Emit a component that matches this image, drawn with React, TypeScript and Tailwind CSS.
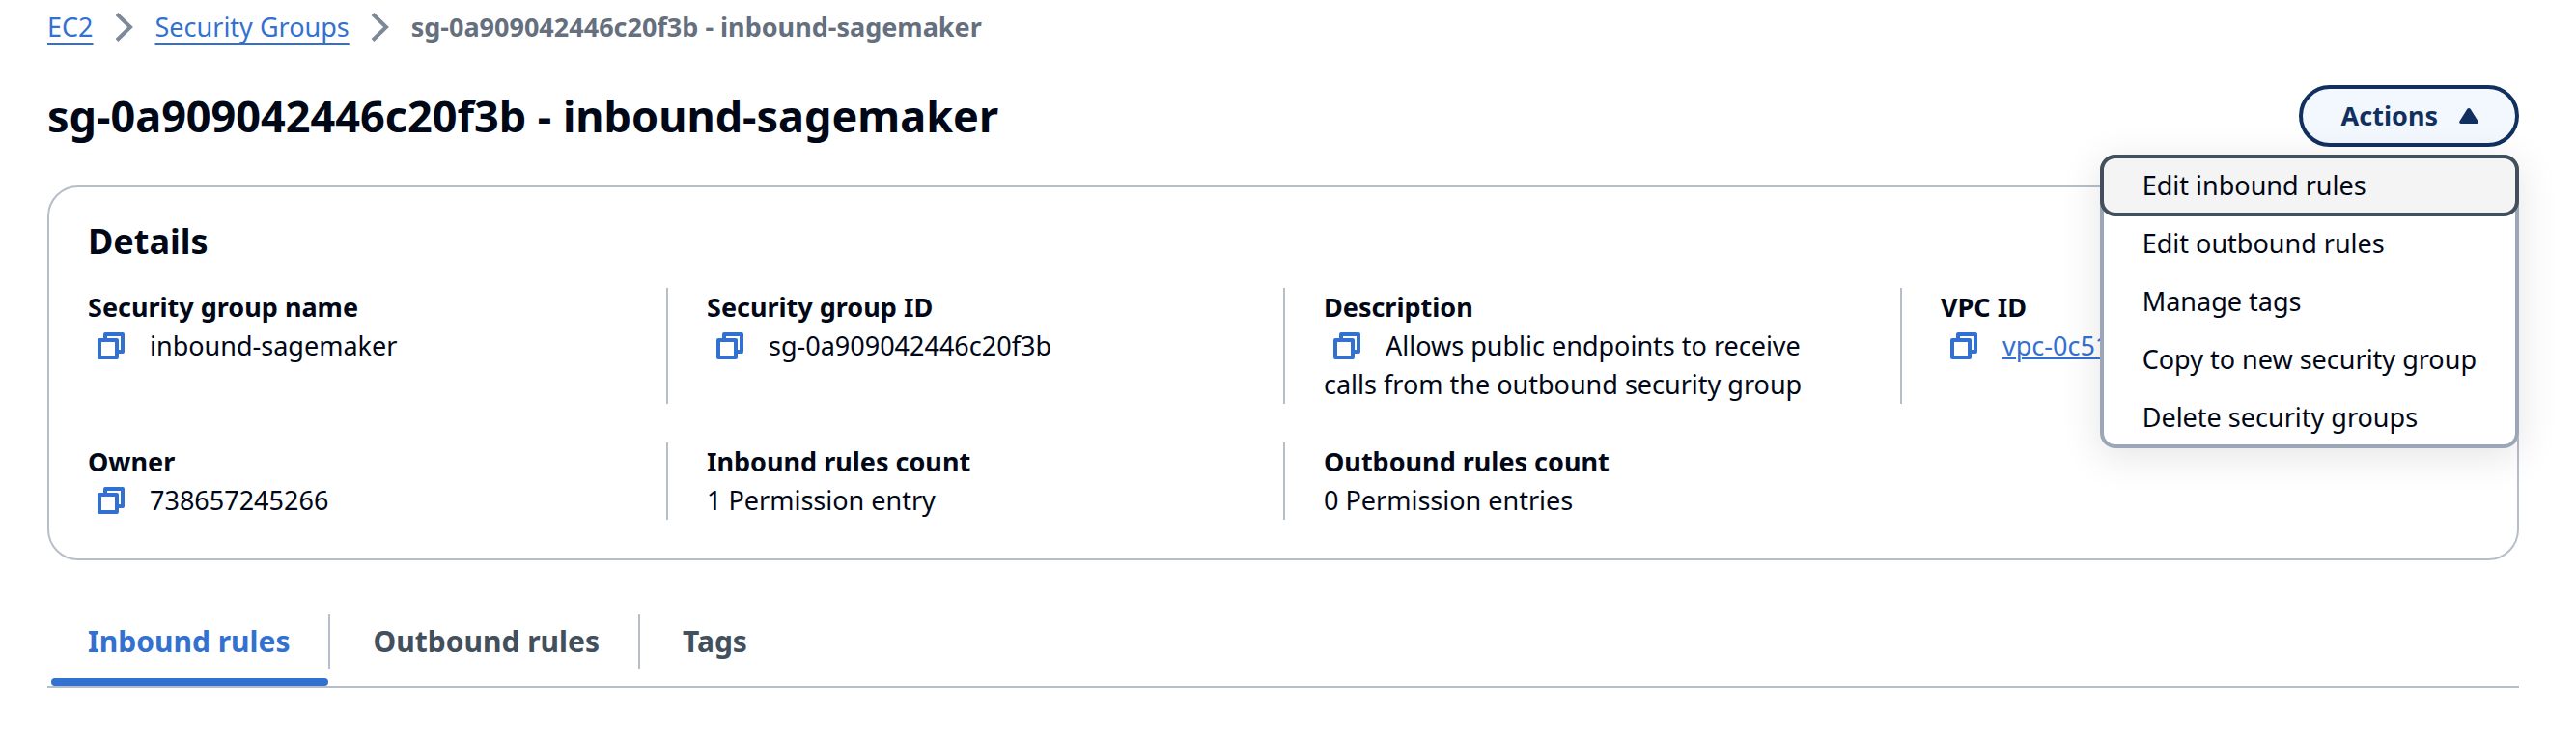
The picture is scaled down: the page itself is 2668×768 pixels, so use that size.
import React from 'react';

type Detail = {
  label: string;
  value: string;
  copyable?: boolean;
  href?: string;
};

const details: Detail[] = [
  { label: 'Security group name', value: 'inbound-sagemaker', copyable: true },
  { label: 'Security group ID', value: 'sg-0a909042446c20f3b', copyable: true },
  {
    label: 'Description',
    value: 'Allows public endpoints to receive calls from the outbound security group',
    copyable: true,
  },
  { label: 'VPC ID', value: 'vpc-0c51', copyable: true, href: '#vpc' },
  { label: 'Owner', value: '738657245266', copyable: true },
  { label: 'Inbound rules count', value: '1 Permission entry' },
  { label: 'Outbound rules count', value: '0 Permission entries' },
];

const menuItems = [
  'Edit inbound rules',
  'Edit outbound rules',
  'Manage tags',
  'Copy to new security group',
  'Delete security groups',
];

const tabs = ['Inbound rules', 'Outbound rules', 'Tags'];

const ChevronIcon: React.FC = () => (
  <svg
    viewBox="0 0 20 32"
    className="w-5 h-8 shrink-0"
    fill="none"
    stroke="#7d8998"
    strokeWidth="4"
    aria-hidden="true"
  >
    <path d="M2 2.5 16 16 2 29.5" />
  </svg>
);

const CopyButton: React.FC<{ label: string }> = ({ label }) => (
  <button type="button" aria-label={`Copy ${label}`} className="inline-block align-top h-10 px-2 mr-4">
    <svg
      viewBox="0 0 16 16"
      className="w-8 h-8"
      fill="none"
      stroke="#3371d0"
      strokeWidth="2"
      strokeLinejoin="round"
      aria-hidden="true"
    >
      <path d="M2 5h9v9H2z" />
      <path d="M5 5V2h9v9h-3" />
    </svg>
  </button>
);

const ActionsMenu: React.FC = () => (
  <div className="relative">
    <button
      type="button"
      aria-haspopup="menu"
      aria-expanded="true"
      className="flex items-center gap-[22px] h-16 px-10 pr-[38px] rounded-full border-4 border-[#11305f] bg-[#f2f8fd] text-[#11305f] font-bold"
    >
      Actions
      <svg viewBox="0 0 20 16" className="w-5 h-4" fill="currentColor" aria-hidden="true">
        <path d="M10 0a2 2 0 0 1 1.600.8L19.600 13.400A1.700 1.700 0 0 1 18.200 16H1.800A1.700 1.700 0 0 1 .4 13.400L8.400.8A2 2 0 0 1 10 0z" />
      </svg>
    </button>
    <ul
      role="menu"
      className="absolute right-0 top-full mt-2 z-10 rounded-2xl bg-white ring-4 ring-inset ring-[#9ba7b6] shadow-[0_8px_40px_2px_rgba(0,7,22,0.1)]"
    >
      {menuItems.map((item, index) => (
        <li key={item} role="none" className="not-first:-mt-1">
          <button
            type="button"
            role="menuitem"
            className={
              index === 0
                ? 'relative w-full h-16 px-10 rounded-2xl border-4 border-[#424f5d] bg-[#f4f4f4] text-left leading-8 whitespace-nowrap'
                : 'w-full h-16 px-10 border-4 border-transparent text-left leading-8 whitespace-nowrap'
            }
          >
            {item}
          </button>
        </li>
      ))}
    </ul>
  </div>
);

const App: React.FC = () => {
  return (
    <main className="bg-white pl-[49px] pr-[59px] pt-2 text-[27px] leading-10 text-[#000716] font-['Noto_Sans','Open_Sans',sans-serif]">
      <nav aria-label="Breadcrumbs">
        <ol className="flex items-center gap-[22px]">
          <li className="flex items-center gap-[22px]">
            <a href="#ec2" className="text-[#3371d0] underline decoration-2 underline-offset-[7px]">
              EC2
            </a>
            <ChevronIcon />
          </li>
          <li className="flex items-center gap-[22px]">
            <a href="#groups" className="text-[#3371d0] underline decoration-2 underline-offset-[7px]">
              Security Groups
            </a>
            <ChevronIcon />
          </li>
          <li className="font-bold text-[#656f7e]">sg-0a909042446c20f3b - inbound-sagemaker</li>
        </ol>
      </nav>

      <header className="flex items-center justify-between mt-10">
        <h1 className="text-[45px] leading-16 font-bold">sg-0a909042446c20f3b - inbound-sagemaker</h1>
        <ActionsMenu />
      </header>

      <section className="mt-10 pt-8 pb-10 rounded-[32px] border-2 border-[#b6bec9]">
        <h2 className="px-10 text-[36px] leading-12 font-bold">Details</h2>
        <dl className="grid grid-cols-4 gap-y-10 mt-6">
          {details.map((detail, index) => (
            <div
              key={detail.label}
              className={index % 4 === 0 ? 'pl-10 pr-16' : 'pl-10 pr-16 border-l-2 border-[#b6bec9]'}
            >
              <dt className="font-bold">{detail.label}</dt>
              <dd>
                {detail.copyable && <CopyButton label={detail.label} />}
                {detail.href ? (
                  <a href={detail.href} className="text-[#3371d0] underline decoration-2 underline-offset-2">
                    {detail.value}
                  </a>
                ) : (
                  detail.value
                )}
              </dd>
            </div>
          ))}
        </dl>
      </section>

      <div role="tablist" className="flex mt-14 border-b-2 border-[#b6bec9] text-[30px] font-bold">
        {tabs.map((tab, index) => (
          <div key={tab} className="pl-1">
            <div className={index < 2 ? 'h-14 border-r-2 border-[#b6bec9]' : 'h-14'}>
              <button
                type="button"
                role="tab"
                aria-selected={index === 0}
                className={index === 0 ? 'h-14 pl-[38px] pr-10 text-[#3371d0]' : 'h-14 px-10 text-[#424f5d]'}
              >
                {tab}
              </button>
            </div>
            <div className={index === 0 ? 'h-2 mt-[10px] mr-0.5 rounded-full bg-[#3371d0]' : 'h-2 mt-[10px]'} />
          </div>
        ))}
      </div>
    </main>
  );
};

export default App;
